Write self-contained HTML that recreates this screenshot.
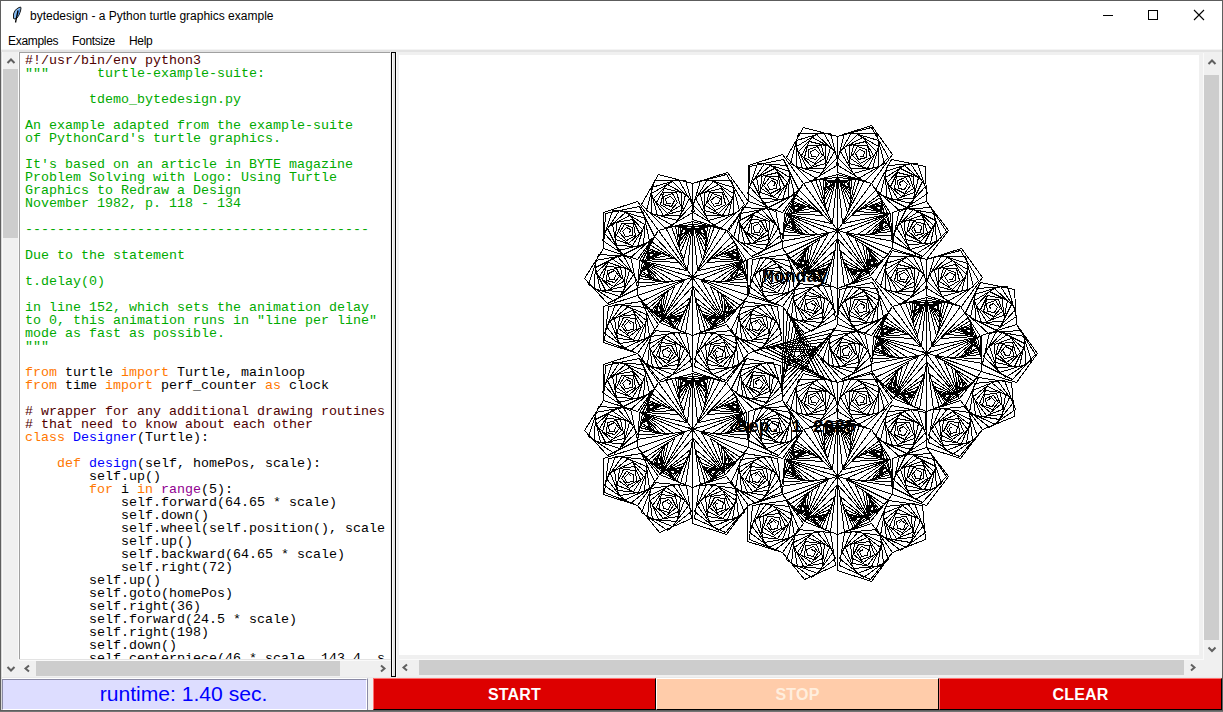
<!DOCTYPE html>
<html><head><meta charset="utf-8">
<style>
*{margin:0;padding:0;box-sizing:border-box}
html,body{width:1223px;height:712px;overflow:hidden;background:#f0f0f0;font-family:"Liberation Sans",sans-serif}
.a{position:absolute}
#title{left:0;top:0;width:1223px;height:49px;background:#fff}
#ttext{left:30px;top:9px;font-size:12px;color:#000;white-space:pre}
.menu{top:34px;font-size:12px;color:#000;letter-spacing:-0.3px}
#code{left:20px;top:53px;width:370px;height:606px;background:#fff;overflow:hidden}
#codepre{position:absolute;left:5px;top:1px;font-family:"Liberation Mono",monospace;font-size:13.33px;line-height:13px;white-space:pre;color:#000}
#canvas{left:399px;top:55px;width:800px;height:600px;background:#fff;overflow:hidden}
.thumb{background:#cdcdcd}
.btn{top:678px;height:32px;font-family:"Liberation Sans",sans-serif;font-weight:bold;font-size:16px;text-align:center;line-height:31px;letter-spacing:0.2px;border-style:solid;border-width:1px}
.arr{fill:none;stroke:#606060;stroke-width:2}
</style></head><body>
<!-- title bar -->
<div id="title" class="a"></div>
<svg class="a" style="left:0;top:0" width="30" height="30">
  <path d="M13.5 18.5 L13.5 14 L15 10.5 L18 8 L20.5 7 L21 8 L20.5 11 L19 15 L17 18 L15 19 Z" fill="#86bbf0" stroke="#1a1a1a" stroke-width="1"/>
  <path d="M20 8.5 L19.5 12 L18 16 L16.5 17.5 L17.5 11.5 Z" fill="#3f86e0"/>
  <path d="M18 10.5 L15.5 22.5" stroke="#000" stroke-width="1.3"/>
</svg>
<div id="ttext" class="a">bytedesign - a Python turtle graphics example</div>
<svg class="a" style="left:1100px;top:8px" width="110" height="16">
  <rect x="3" y="7" width="10" height="1" fill="#000"/>
  <rect x="48.5" y="2.5" width="9" height="9" fill="none" stroke="#000" stroke-width="1"/>
  <path d="M94 2 L104 12 M104 2 L94 12" stroke="#000" stroke-width="1.1"/>
</svg>
<div class="a menu" style="left:8px">Examples</div>
<div class="a menu" style="left:72px">Fontsize</div>
<div class="a menu" style="left:129px">Help</div>
<div class="a" style="left:0;top:49px;width:1223px;height:1px;background:#f4f4f4"></div>
<div class="a" style="left:0;top:50px;width:1223px;height:2px;background:#e3e3e3"></div>

<!-- left pane -->
<div class="a" style="left:2px;top:52px;width:1px;height:626px;background:#fafafa"></div>
<div class="a" style="left:18px;top:52px;width:1px;height:608px;background:#fafafa"></div>
<div class="a thumb" style="left:3px;top:69px;width:15px;height:169px"></div>
<svg class="a" style="left:0;top:0" width="400" height="712">
  <path class="arr" d="M7.5 63 L11 59.5 L14.5 63"/>
  <path class="arr" d="M7.5 667 L11 670.5 L14.5 667"/>
  <path class="arr" d="M29 665.5 L25.5 668.5 L29 671.5"/>
  <path class="arr" d="M381 665.5 L384.5 668.5 L381 671.5"/>
</svg>
<div id="code" class="a"><pre id="codepre"><span style="color:#500000">#!/usr/bin/env python3</span>
<span style="color:#00aa00">&quot;&quot;&quot;      turtle-example-suite:</span>

<span style="color:#00aa00">        tdemo_bytedesign.py</span>

<span style="color:#00aa00">An example adapted from the example-suite</span>
<span style="color:#00aa00">of PythonCard&#x27;s turtle graphics.</span>

<span style="color:#00aa00">It&#x27;s based on an article in BYTE magazine</span>
<span style="color:#00aa00">Problem Solving with Logo: Using Turtle</span>
<span style="color:#00aa00">Graphics to Redraw a Design</span>
<span style="color:#00aa00">November 1982, p. 118 - 134</span>

<span style="color:#00aa00">-------------------------------------------</span>

<span style="color:#00aa00">Due to the statement</span>

<span style="color:#00aa00">t.delay(0)</span>

<span style="color:#00aa00">in line 152, which sets the animation delay</span>
<span style="color:#00aa00">to 0, this animation runs in &quot;line per line&quot;</span>
<span style="color:#00aa00">mode as fast as possible.</span>
<span style="color:#00aa00">&quot;&quot;&quot;</span>

<span style="color:#ff7700">from</span> turtle <span style="color:#ff7700">import</span> Turtle, mainloop
<span style="color:#ff7700">from</span> time <span style="color:#ff7700">import</span> perf_counter <span style="color:#ff7700">as</span> clock

<span style="color:#500000"># wrapper for any additional drawing routines</span>
<span style="color:#500000"># that need to know about each other</span>
<span style="color:#ff7700">class</span> <span style="color:#0000ff">Designer</span>(Turtle):

    <span style="color:#ff7700">def</span> <span style="color:#0000ff">design</span>(self, homePos, scale):
        self.up()
        <span style="color:#ff7700">for</span> i <span style="color:#ff7700">in</span> <span style="color:#900090">range</span>(5):
            self.forward(64.65 * scale)
            self.down()
            self.wheel(self.position(), scale
            self.up()
            self.backward(64.65 * scale)
            self.right(72)
        self.up()
        self.goto(homePos)
        self.right(36)
        self.forward(24.5 * scale)
        self.right(198)
        self.down()
        self.centerpiece(46 * scale, 143.4, s</pre></div>
<div class="a" style="left:19px;top:52px;width:371px;height:1px;background:#a0a0a0"></div>
<div class="a" style="left:19px;top:52px;width:1px;height:607px;background:#a0a0a0"></div>
<div class="a" style="left:19px;top:659px;width:372px;height:1px;background:#e3e3e3"></div>
<div class="a" style="left:19px;top:660px;width:372px;height:1px;background:#fafafa"></div>
<!-- left h-scroll -->
<div class="a thumb" style="left:36px;top:661px;width:304px;height:15px"></div>
<div class="a" style="left:0;top:677px;width:1223px;height:1px;background:#e8e8e8"></div>
<!-- sash -->
<div class="a" style="left:391px;top:52px;width:5px;height:625px;background:#e3e3e3;border:1px solid #000"></div>
<div class="a" style="left:392px;top:53px;width:1px;height:623px;background:#fafafa"></div>

<!-- canvas -->
<div class="a" style="left:396px;top:52px;width:1px;height:626px;background:#fafafa"></div>
<div id="canvas" class="a">
<svg width="800" height="600" style="position:absolute;left:0;top:0">
<g transform="translate(-398.5,-54.5)">
<path d="M960 400L982 429 960 458 926 447 926 411 960 400 982 429 959 456 928 442 933 409 966 406 977 436 952 454 928 435 940 408 969 412 972 440 946 450 931 429 947 408 970 419 966 443 943 445 934 424 952 411 969 424 961 443 941 440 939 421 956 414 967 429 956 442 941 435 943 420 958 418 963 431 952 439 943 431 948 421 958 422 959 433 951 436 946 429 950 423 957 426 956 432 950 433 949 428 952 426M960 400L982 429 960 458 926 447 926 411 960 400 982 429 1014 416 1011 382 978 377 964 407 989 427 1015 409 1004 380 974 383 969 412 995 424 1013 402 997 380 972 390 975 415 999 419 1009 397 991 382 973 396 981 416 1002 414 1005 394 987 386 975 400 986 415 1002 409 1000 392 985 390 979 403 990 412 1000 404 996 393 984 394 982 405 992 409 998 402 993 395 985 398 986 405 992 406 995 401 991 397 987 400M981 335L1016 324 1037 353 1016 382 981 371 981 335 1016 324 1035 354 1012 379 982 364 989 332 1021 330 1031 360 1005 377 983 356 996 331 1024 336 1025 364 999 372 985 350 1002 332 1024 343 1019 366 996 367 989 346 1007 334 1023 348 1014 366 995 362 994 344 1011 338 1020 352 1009 364 995 357 998 343 1012 342 1016 355 1006 362 997 354 1002 344 1012 346 1013 356 1004 358 1000 352 1005 346 1011 349 1009 355 1005 355 1003 351M981 335L1016 324 1037 353 1016 382 981 371 981 335 1016 324 1014 289 980 282 965 312 989 334 1016 316 1007 286 976 288 970 317 996 330 1015 309 1000 286 974 294 975 320 1000 326 1011 304 994 288 974 300 981 322 1003 321 1007 300 989 291 976 305 986 321 1003 315 1002 298 987 295 980 309 990 319 1002 311 998 299 986 299 983 311 993 316 1000 308 995 300 986 303 987 311 994 312 997 307 993 303 989 305 990 309M926 295L926 259 961 248 982 277 961 306 926 295 926 259 960 250 978 280 954 304 925 287 934 256 965 256 973 286 947 301 926 280 941 255 967 263 967 289 942 296 929 274 947 257 967 269 961 291 939 291 934 270 952 260 966 274 956 291 938 286 938 268 955 264 963 278 952 289 939 281 943 268 956 268 959 280 949 286 941 278 946 269 955 272 955 280 948 282 944 276 949 272 954 274 952 279 948 279M926 295L926 259 961 248 982 277 961 306 926 295 926 259 892 250 875 280 899 304 927 287 919 256 888 256 880 286 906 301 926 280 912 255 885 263 885 289 911 296 923 274 906 257 885 269 891 291 913 291 919 270 901 260 887 274 897 291 914 286 914 268 898 264 890 278 901 289 914 281 910 268 897 268 894 280 904 286 911 278 906 269 897 272 897 280 905 282 908 276 904 272 899 274 900 279 904 279M871 335L837 324 837 288 871 277 892 306 871 335 837 324 839 289 872 282 888 312 863 334 836 316 846 286 877 288 883 317 857 330 838 309 853 286 878 294 877 320 852 326 841 304 859 288 878 300 871 322 850 321 845 300 863 291 876 305 866 321 849 315 850 298 866 295 873 309 862 319 850 311 854 299 867 299 869 311 860 316 853 308 858 300 866 303 866 311 859 312 856 307 860 303 864 305 863 309M871 335L837 324 837 288 871 277 892 306 871 335 837 324 818 354 841 379 871 364 864 332 832 330 822 360 848 377 870 356 857 331 829 336 828 364 853 372 867 350 850 332 829 343 833 366 857 367 863 346 845 334 830 348 839 366 858 362 859 344 842 338 833 352 844 364 857 357 854 343 840 342 836 355 847 362 855 354 850 344 840 346 840 356 848 358 852 352 848 346 842 349 843 355 848 355 849 351M926 353L926 348 926 411 893 398 926 362 919 409 896 396 924 373 914 407 898 395 921 380 910 405 900 394 918 386 908 403 901 394 916 390 906 401 902 394 914 392 905 400 903 394 912 394 905 398 904 394 910 395M926 353L926 348 926 411 959 398 927 362 933 409 957 396 929 373 939 407 955 395 931 380 942 405 953 394 934 386 945 403 951 394 937 390 946 401 950 394 939 392 947 400 950 394 941 394 948 398 949 394 943 395M926 353L922 351 981 371 959 398 935 356 977 377 958 395 944 362 974 381 957 393 951 366 971 384 957 391 955 371 968 386 957 390 958 374 966 387 958 388 960 377 964 387 958 388 961 380 963 388 958 387 961 381M926 353L922 351 981 371 980 336 935 355 982 363 977 337 946 357 981 358 975 339 954 357 980 354 974 341 960 356 979 351 973 342 964 354 978 349 972 343 967 353 977 347 972 343 970 352 976 347 972 344 971 350M926 353L923 357 960 306 980 336 932 346 965 312 976 336 940 338 968 317 974 336 947 334 970 320 972 335 952 331 970 324 971 335 956 329 971 326 970 334 960 329 971 328 969 334 962 329 971 329 969 333 964 329M926 353L923 357 960 306 926 297 931 345 953 303 927 300 936 335 948 302 928 302 938 328 944 302 929 304 939 322 941 302 930 305 939 317 938 302 931 306 939 314 937 303 931 306 938 311 936 304 932 307 938 310M926 353L929 357 892 306 926 297 921 345 899 303 925 300 917 335 905 302 924 302 914 328 909 302 923 304 913 322 912 302 923 305 913 317 914 302 922 306 914 314 916 303 921 306 914 311 917 304 921 307 915 310M926 353L929 357 892 306 873 336 920 346 888 312 876 336 913 338 885 317 879 336 906 334 883 320 881 335 901 331 882 324 882 335 896 329 882 326 883 334 893 329 882 328 884 334 891 329 882 329 884 333 889 329M926 353L931 351 871 371 873 336 917 355 871 363 876 337 907 357 871 358 878 339 899 357 872 354 879 341 893 356 873 351 880 342 888 354 874 349 880 343 885 353 875 347 880 343 883 352 876 347 880 344 882 350M926 353L931 351 871 371 893 398 918 356 875 377 895 395 908 362 879 381 895 393 902 366 882 384 895 391 897 371 885 386 895 390 895 374 887 387 895 388 893 377 888 387 895 388 892 380 890 388 894 387 892 381M926 353L893 398M926 353L873 336M926 353L926 297M926 353L980 336M926 353L959 398M803 523L782 552 747 541 747 505 782 494 803 523 782 552 749 539 752 505 786 500 799 530 774 550 749 532 760 503 789 506 794 535 768 547 751 525 766 503 791 513 788 538 764 542 754 520 772 505 790 519 782 539 762 537 759 517 776 509 788 523 777 538 762 532 763 515 779 513 785 526 774 535 763 527 767 516 779 517 781 528 772 532 766 525 771 518 778 521 777 528 771 529 769 523 773 520 776 523M803 523L782 552 747 541 747 505 782 494 803 523 782 552 804 579 835 565 830 532 797 529 786 559 811 577 835 558 823 531 794 535 791 563 817 573 833 551 816 531 793 542 797 566 821 568 829 547 811 534 794 547 803 566 822 563 824 544 807 537 797 552 807 565 822 558 820 543 805 541 800 554 811 562 820 554 816 544 805 545 804 556 813 559 818 552 813 546 806 549 807 555 813 556 815 551 811 549M871 523L892 552 871 581 837 570 837 534 871 523 892 552 870 579 839 565 844 532 877 529 888 559 863 577 839 558 851 531 880 535 883 563 857 573 841 551 858 531 881 542 877 566 853 568 845 547 863 534 880 547 871 566 852 563 850 544 867 537 877 552 867 565 852 558 854 543 869 541 874 554 863 562 853 554 858 544 869 545 870 556 861 559 856 552 861 546 868 549 867 555 861 556 859 551 863 549M871 523L892 552 871 581 837 570 837 534 871 523 892 552 925 539 922 505 888 500 875 530 900 550 925 532 914 503 885 506 880 535 906 547 923 525 907 503 883 513 886 538 910 542 920 520 902 505 884 519 891 539 912 537 915 517 898 509 886 523 896 538 912 532 911 515 895 513 889 526 900 535 911 527 906 516 895 517 893 528 902 532 908 525 903 518 896 521 897 528 903 529 905 523 901 520 898 523M892 458L926 447 948 476 926 505 892 494 892 458 926 447 946 476 922 502 892 487 899 455 931 453 941 483 915 499 893 479 906 453 934 459 936 487 910 495 896 473 913 455 935 466 930 489 907 490 900 469 918 457 933 471 924 489 905 485 904 467 921 461 931 475 920 487 906 480 909 466 923 465 927 478 917 485 908 477 913 467 923 469 923 478 915 481 911 475 916 469 921 472 920 478 915 478 914 474M892 458L926 447 948 476 926 505 892 494 892 458 926 447 925 412 891 405 875 435 900 457 927 439 917 409 887 411 880 440 906 453 925 432 910 409 885 417 886 443 911 449 922 427 904 411 885 423 892 445 913 444 918 423 900 414 887 428 897 444 914 438 913 421 897 418 890 432 901 442 913 434 909 422 896 422 894 434 904 439 910 431 905 423 897 426 898 434 904 435 907 430 903 426 899 428 900 432M837 418L837 382 871 371 892 400 871 429 837 418 837 382 871 373 888 403 864 427 836 410 844 379 876 379 884 409 858 424 837 403 851 378 878 386 878 412 853 419 840 397 857 380 878 392 872 414 850 414 844 393 862 383 876 397 867 414 849 409 849 391 865 387 873 401 862 412 850 404 853 391 867 391 870 403 860 409 852 401 857 392 866 395 866 403 858 405 855 399 859 395 864 397 863 402 859 402M837 418L837 382 871 371 892 400 871 429 837 418 837 382 803 373 786 403 810 427 838 410 830 379 798 379 790 409 816 424 837 403 823 378 796 386 796 412 821 419 834 397 816 380 796 392 802 414 824 414 830 393 812 383 798 397 807 414 825 409 825 391 809 387 801 401 811 412 824 404 821 391 807 391 804 403 814 409 822 401 817 392 808 395 808 403 815 405 819 399 815 395 810 397 811 402 815 402M837 476L842 474 782 494 784 459 828 478 781 486 786 460 817 480 782 481 788 462 809 480 783 477 790 464 803 479 784 474 790 465 799 477 785 472 791 466 796 476 786 470 791 466 794 475 787 469 791 467 792 473M837 476L842 474 782 494 804 521 828 479 786 500 805 518 819 485 789 504 806 516 812 489 793 507 806 514 808 494 795 509 806 512 805 497 797 510 806 511 804 500 799 510 805 511 803 502 800 511 805 510 802 504M837 476L837 471 837 534 804 521 836 485 830 532 807 519 834 496 825 530 809 518 832 503 821 528 810 517 829 509 819 526 812 517 827 513 817 524 813 517 824 515 816 523 814 517 822 517 815 521 814 517 821 518M837 476L837 471 837 534 870 521 838 485 844 532 867 519 840 496 849 530 865 518 842 503 853 528 863 517 845 509 855 526 862 517 847 513 857 524 861 517 850 515 858 523 860 517 852 517 859 521 860 517 853 518M837 476L832 474 892 494 870 521 846 479 888 500 869 518 855 485 884 504 868 516 862 489 881 507 868 514 866 494 879 509 868 512 869 497 877 510 868 511 870 500 875 510 869 511 871 502 874 511 869 510 872 504M837 476L832 474 892 494 890 459 846 478 893 486 887 460 857 480 892 481 886 462 865 480 891 477 884 464 871 479 890 474 884 465 875 477 889 472 883 466 878 476 888 470 883 466 880 475 887 469 883 467 882 473M837 476L834 480 871 429 890 459 843 469 876 435 887 459 851 461 879 440 884 459 857 457 880 443 883 458 863 454 881 446 881 458 867 452 881 449 880 457 870 452 881 451 880 457 873 452 881 452 879 456 875 452M837 476L834 480 871 429 837 420 842 468 864 426 838 423 847 458 859 425 839 425 849 451 855 425 840 427 850 445 851 425 841 428 850 440 849 425 841 429 850 437 847 426 842 429 849 434 846 426 843 430 848 433M837 476L840 480 803 429 837 420 832 468 810 426 836 423 827 458 815 425 835 425 825 451 819 425 834 427 824 445 823 425 833 428 824 440 825 425 832 429 824 437 827 426 832 429 825 434 828 426 831 430 826 433M837 476L840 480 803 429 784 459 831 469 798 435 787 459 823 461 795 440 789 459 817 457 794 443 791 458 811 454 793 446 793 458 807 452 793 449 794 457 804 452 793 451 794 457 801 452 793 452 795 456 799 452M837 476L784 459M837 476L837 420M837 476L890 459M837 476L870 521M837 476L804 521M637 411L603 400 603 364 637 353 658 382 637 411 603 400 605 365 639 358 654 388 629 410 602 392 612 362 643 364 649 393 623 406 604 385 619 362 645 370 643 396 618 402 607 380 625 364 644 376 637 398 616 397 612 376 629 367 642 381 632 397 615 391 616 374 632 371 639 385 628 395 616 387 621 375 633 375 635 387 626 392 619 384 624 376 632 379 632 387 625 388 622 383 626 379 630 381 629 385M637 411L603 400 603 364 637 353 658 382 637 411 603 400 584 430 607 455 637 440 630 408 598 406 588 436 614 453 636 432 623 407 595 412 594 440 619 448 633 426 617 408 595 419 600 442 623 443 629 422 611 410 596 424 605 442 624 438 625 420 608 414 599 428 610 440 623 433 620 419 606 418 602 431 613 438 621 430 616 420 607 422 606 432 614 434 619 428 614 422 608 425 609 431 614 431 615 427M658 476L637 505 603 494 603 458 637 447 658 476 637 505 604 492 608 458 641 453 655 483 630 503 604 485 615 456 645 459 649 488 623 500 606 478 622 456 646 466 644 491 619 495 610 473 628 458 646 472 638 492 617 490 614 470 632 462 643 476 633 491 617 485 619 468 634 466 640 479 629 488 618 480 623 469 635 470 636 481 627 485 621 478 626 471 633 474 633 481 626 482 624 477 628 473 631 476M658 476L637 505 603 494 603 458 637 447 658 476 637 505 659 532 691 518 686 485 653 482 641 512 667 530 691 511 678 484 650 488 647 516 672 526 688 505 672 484 649 495 652 519 676 521 684 500 666 487 650 500 658 519 678 516 680 497 663 490 652 505 663 518 678 511 675 496 661 494 656 507 666 515 676 507 671 497 660 498 659 509 668 512 673 505 668 499 662 502 663 508 668 509 670 504 667 502M726 476L748 505 726 534 692 523 692 487 726 476 748 505 725 532 694 518 699 485 732 482 744 512 718 530 694 511 706 484 735 488 738 516 712 526 697 505 713 484 736 495 732 519 709 521 700 500 718 487 735 500 727 519 707 516 705 497 722 490 733 505 722 518 707 511 710 496 724 494 729 507 719 515 709 507 714 497 724 498 725 509 717 512 712 505 717 499 723 502 722 508 716 509 715 504 718 502M726 476L748 505 726 534 692 523 692 487 726 476 748 505 781 492 777 458 744 453 730 483 755 503 781 485 770 456 740 459 735 488 761 500 779 478 763 456 739 466 741 491 765 495 775 473 757 458 739 472 747 492 768 490 771 470 753 462 741 476 752 491 768 485 766 468 751 466 745 479 756 488 766 480 762 469 750 470 749 481 758 485 764 478 759 471 751 474 752 481 758 482 761 477 757 473 754 476M748 411L782 400 803 429 782 458 748 447 748 411 782 400 801 430 778 455 748 440 755 408 787 406 797 436 771 453 749 432 762 407 790 412 791 440 766 448 751 426 768 408 790 419 785 442 762 443 755 422 773 410 789 424 780 442 761 438 760 420 777 414 786 428 775 440 761 433 764 419 778 418 782 431 772 438 763 430 768 420 778 422 779 432 771 434 766 428 771 422 777 425 776 431 771 431 769 427M748 411L782 400 803 429 782 458 748 447 748 411 782 400 780 365 746 358 731 388 755 410 782 392 773 362 742 364 736 393 762 406 781 385 766 362 740 370 742 396 766 402 778 380 760 364 740 376 747 398 769 397 773 376 755 367 742 381 753 397 769 391 769 374 753 371 746 385 757 395 768 387 764 375 752 375 749 387 759 392 766 384 761 376 753 379 753 387 760 388 763 383 759 379 755 381 756 385M692 429L695 433 658 382 692 373 687 421 665 379 692 376 683 411 671 378 691 378 680 404 675 378 690 380 679 398 678 378 689 381 679 393 680 378 688 382 680 390 682 379 687 382 680 387 683 380 687 383 681 386M692 429L695 433 658 382 639 412 686 422 654 388 642 412 679 414 651 393 645 412 672 410 649 396 647 411 667 407 648 400 648 411 662 405 648 402 649 410 659 405 648 404 650 410 657 405 648 405 650 409 655 405M692 429L697 427 637 447 639 412 683 431 637 439 642 413 673 433 637 434 644 415 665 433 638 430 645 417 659 432 639 427 646 418 654 430 640 425 646 419 651 429 642 423 646 419 649 428 642 423 647 420 648 426M692 429L697 427 637 447 660 474 684 432 641 453 661 471 674 438 645 457 661 469 668 442 648 460 661 467 664 447 651 462 661 466 661 450 653 463 661 464 659 453 655 463 661 464 658 456 656 464 661 463 658 457M692 429L692 424 692 487 659 474 692 438 685 485 662 472 690 449 680 483 664 471 687 456 676 481 666 470 685 462 674 479 667 470 682 466 672 477 668 470 680 468 671 476 669 470 678 470 671 474 670 470 676 471M692 429L692 424 692 487 725 474 693 438 700 485 723 472 695 449 705 483 721 471 698 456 708 481 719 470 700 462 711 479 718 470 703 466 712 477 716 470 705 468 713 476 716 470 707 470 714 474 715 470 709 471M692 429L688 427 748 447 725 474 701 432 744 453 724 471 710 438 740 457 724 469 717 442 737 460 723 467 721 447 734 462 724 466 724 450 732 463 724 464 726 453 730 463 724 464 727 456 729 464 724 463 727 457M692 429L688 427 748 447 746 412 701 431 748 439 743 413 712 433 747 434 741 415 720 433 747 430 740 417 726 432 745 427 739 418 730 430 744 425 739 419 734 429 743 423 738 419 736 428 742 423 738 420 737 426M692 429L689 433 726 382 746 412 698 422 731 388 742 412 706 414 734 393 740 412 713 410 736 396 738 411 718 407 737 400 737 411 722 405 737 402 736 410 726 405 737 404 735 410 728 405 737 405 735 409 730 405M692 429L689 433 726 382 692 373 697 421 720 379 693 376 702 411 714 378 694 378 704 404 710 378 695 380 705 398 707 378 696 381 706 393 704 378 697 382 705 390 703 379 698 382 705 387 702 380 698 383 704 386M692 429L692 373M692 429L746 412M692 429L725 474M692 429L659 474M692 429L639 412M692 219L692 183 727 172 748 201 727 230 692 219 692 183 726 174 744 204 720 228 691 211 700 180 731 180 739 210 713 225 692 204 707 179 733 187 733 213 708 220 695 198 713 181 733 193 728 215 705 215 700 194 718 184 732 198 722 215 704 210 704 192 721 188 729 202 718 213 705 205 709 192 722 192 725 204 715 210 707 202 712 193 721 196 721 204 714 206 710 200 715 196 720 198 718 203 714 203M692 219L692 183 727 172 748 201 727 230 692 219 692 183 658 174 641 204 665 228 694 211 685 180 654 180 646 210 672 225 692 204 678 179 651 187 651 213 677 220 689 198 672 181 651 193 657 215 680 215 685 194 667 184 653 198 663 215 681 210 681 192 664 188 656 202 667 213 680 205 676 192 663 192 660 204 670 210 677 202 672 193 663 196 663 204 671 206 674 200 670 196 665 198 666 203 670 203M637 259L603 248 603 212 637 201 658 230 637 259 603 248 605 213 639 206 654 236 629 258 602 240 612 210 643 212 649 241 623 254 604 233 619 210 645 218 643 244 618 250 607 228 625 212 644 224 637 246 616 245 612 224 629 215 642 229 632 245 615 239 616 222 632 219 639 233 628 243 616 235 621 223 633 223 635 235 626 240 619 232 624 224 632 227 632 235 625 236 622 231 626 227 630 229 629 233M637 259L603 248 603 212 637 201 658 230 637 259 603 248 584 278 607 303 637 288 630 256 598 254 588 284 614 301 636 280 623 255 595 260 594 288 619 296 633 274 617 256 595 267 600 290 623 291 629 270 611 258 596 272 605 290 624 286 625 268 608 262 599 276 610 288 623 281 620 267 606 266 602 279 613 286 621 278 616 268 607 270 606 280 614 282 619 276 614 270 608 273 609 279 614 279 615 275M658 324L637 353 603 342 603 306 637 295 658 324 637 353 604 340 608 306 641 301 655 331 630 351 604 333 615 304 645 307 649 336 623 348 606 326 622 304 646 314 644 339 619 343 610 321 628 306 646 320 638 340 617 338 614 318 632 310 643 324 633 339 617 333 619 316 634 314 640 327 629 336 618 328 623 317 635 318 636 329 627 333 621 326 626 319 633 322 633 329 626 330 624 325 628 321 631 324M658 324L637 353 603 342 603 306 637 295 658 324 637 353 659 380 691 366 686 333 653 330 641 360 667 378 691 359 678 332 650 336 647 364 672 374 688 353 672 332 649 343 652 367 676 369 684 348 666 335 650 348 658 367 678 364 680 345 663 338 652 353 663 366 678 359 675 344 661 342 656 355 666 363 676 355 671 345 660 346 659 357 668 360 673 353 668 347 662 350 663 356 668 357 670 352 667 350M726 324L748 353 726 382 692 371 692 335 726 324 748 353 725 380 694 366 699 333 732 330 744 360 718 378 694 359 706 332 735 336 738 364 712 374 697 353 713 332 736 343 732 367 709 369 700 348 718 335 735 348 727 367 707 364 705 345 722 338 733 353 722 366 707 359 710 344 724 342 729 355 719 363 709 355 714 345 724 346 725 357 717 360 712 353 717 347 723 350 722 356 716 357 715 352 718 350M726 324L748 353 726 382 692 371 692 335 726 324 748 353 781 340 777 306 744 301 730 331 755 351 781 333 770 304 740 307 735 336 761 348 779 326 763 304 739 314 741 339 765 343 775 321 757 306 739 320 747 340 768 338 771 318 753 310 741 324 752 339 768 333 766 316 751 314 745 327 756 336 766 328 762 317 750 318 749 329 758 333 764 326 759 319 751 322 752 329 758 330 761 325 757 321 754 324M692 277L689 281 726 230 746 260 698 270 731 236 742 260 706 262 734 241 740 260 713 258 736 244 738 259 718 255 737 248 737 259 722 253 737 250 736 258 726 253 737 252 735 258 728 253 737 253 735 257 730 253M692 277L689 281 726 230 692 221 697 269 720 227 693 224 702 259 714 226 694 226 704 252 710 226 695 228 705 246 707 226 696 229 706 241 704 226 697 230 705 238 703 227 698 230 705 235 702 228 698 231 704 234M692 277L695 281 658 230 692 221 687 269 665 227 692 224 683 259 671 226 691 226 680 252 675 226 690 228 679 246 678 226 689 229 679 241 680 226 688 230 680 238 682 227 687 230 680 235 683 228 687 231 681 234M692 277L695 281 658 230 639 260 686 270 654 236 642 260 679 262 651 241 645 260 672 258 649 244 647 259 667 255 648 248 648 259 662 253 648 250 649 258 659 253 648 252 650 258 657 253 648 253 650 257 655 253M692 277L697 275 637 295 639 260 683 279 637 287 642 261 673 281 637 282 644 263 665 281 638 278 645 265 659 280 639 275 646 266 654 278 640 273 646 267 651 277 642 271 646 267 649 276 642 271 647 268 648 274M692 277L697 275 637 295 660 322 684 280 641 301 661 319 674 286 645 305 661 317 668 290 648 308 661 315 664 295 651 310 661 314 661 298 653 311 661 312 659 301 655 311 661 312 658 304 656 312 661 311 658 305M692 277L692 272 692 335 659 322 692 286 685 333 662 320 690 297 680 331 664 319 687 304 676 329 666 318 685 310 674 327 667 318 682 314 672 325 668 318 680 316 671 324 669 318 678 318 671 322 670 318 676 319M692 277L692 272 692 335 725 322 693 286 700 333 723 320 695 297 705 331 721 319 698 304 708 329 719 318 700 310 711 327 718 318 703 314 712 325 716 318 705 316 713 324 716 318 707 318 714 322 715 318 709 319M692 277L688 275 748 295 725 322 701 280 744 301 724 319 710 286 740 305 724 317 717 290 737 308 723 315 721 295 734 310 724 314 724 298 732 311 724 312 726 301 730 311 724 312 727 304 729 312 724 311 727 305M692 277L688 275 748 295 746 260 701 279 748 287 743 261 712 281 747 282 741 263 720 281 747 278 740 265 726 280 745 275 739 266 730 278 744 273 739 267 734 277 743 271 738 267 736 276 742 271 738 268 737 274M692 277L746 260M692 277L725 322M692 277L659 322M692 277L639 260M692 277L692 221M892 212L926 201 948 230 926 259 892 248 892 212 926 201 946 231 922 256 892 241 899 209 931 207 941 237 915 254 893 234 906 208 934 213 936 241 910 249 896 227 913 209 935 220 930 243 907 244 900 223 918 211 933 225 924 243 905 239 904 221 921 215 931 229 920 241 906 234 909 220 923 219 927 232 917 239 908 231 913 221 923 223 923 233 915 235 911 229 916 223 921 226 920 232 915 232 914 228M892 212L926 201 948 230 926 259 892 248 892 212 926 201 925 166 891 159 875 189 900 211 927 193 917 163 887 165 880 194 906 207 925 186 910 163 885 171 886 197 911 203 922 181 904 165 885 177 892 199 913 198 918 177 900 168 887 182 897 198 914 192 913 176 897 172 890 186 901 196 913 188 909 176 896 176 894 188 904 193 910 185 905 177 897 180 898 188 904 189 907 184 903 180 899 182 900 186M837 172L837 136 871 125 892 154 871 183 837 172 837 136 871 127 888 157 864 181 836 164 844 133 876 133 884 163 858 178 837 157 851 132 878 140 878 166 853 173 840 151 857 134 878 146 872 168 850 168 844 147 862 137 876 151 867 168 849 163 849 145 865 141 873 155 862 166 850 158 853 145 867 145 870 157 860 163 852 155 857 146 866 149 866 157 858 159 855 153 859 149 864 151 863 156 859 156M837 172L837 136 871 125 892 154 871 183 837 172 837 136 803 127 786 157 810 181 838 164 830 133 798 133 790 163 816 178 837 157 823 132 796 140 796 166 821 173 834 151 816 134 796 146 802 168 824 168 830 147 812 137 798 151 807 168 825 163 825 145 809 141 801 155 811 166 824 158 821 145 807 145 804 157 814 163 822 155 817 146 808 149 808 157 815 159 819 153 815 149 810 151 811 156 815 156M782 212L748 201 748 165 782 154 803 183 782 212 748 201 749 166 783 159 798 189 774 211 747 193 757 163 787 165 794 194 768 207 749 186 764 163 789 171 788 197 763 203 752 181 770 165 789 177 782 199 760 198 756 177 774 168 787 182 777 198 760 192 761 176 777 172 784 186 773 196 761 188 765 176 778 176 780 188 770 193 763 185 769 177 777 180 776 188 769 189 767 184 771 180 775 182 773 186M782 212L748 201 748 165 782 154 803 183 782 212 748 201 728 231 751 256 781 241 775 209 742 207 733 237 758 254 781 234 767 208 740 213 738 241 764 249 778 227 761 209 739 220 744 243 767 244 774 223 756 211 741 225 750 243 768 239 769 221 753 215 743 229 754 241 768 234 765 220 751 219 747 232 757 239 766 231 761 221 751 223 751 233 759 235 763 229 758 223 753 226 754 232 759 232 760 228M803 277L782 306 747 295 747 259 782 248 803 277 782 306 749 293 752 259 786 254 799 284 774 304 749 286 760 257 789 260 794 289 768 301 751 279 766 257 791 267 788 292 764 296 754 274 772 260 790 273 782 293 762 291 759 271 776 263 788 277 777 292 762 286 763 269 779 267 785 280 774 289 763 282 767 270 779 271 781 282 772 286 766 279 771 272 778 275 777 282 771 283 769 278 773 274 776 277M803 277L782 306 747 295 747 259 782 248 803 277 782 306 804 333 835 319 830 286 797 283 786 313 811 331 835 312 823 285 794 289 791 317 817 327 833 306 816 285 793 296 797 320 821 322 829 301 811 288 794 301 803 320 822 317 824 298 807 291 797 306 807 319 822 312 820 297 805 295 800 308 811 316 820 308 816 298 805 299 804 310 813 313 818 306 813 300 806 303 807 309 813 310 815 305 811 303M837 230L832 228 892 248 870 275 846 233 888 254 869 272 855 239 884 258 868 270 862 243 881 261 868 268 866 248 879 263 868 267 869 251 877 264 868 265 870 254 875 264 869 265 871 257 874 265 869 264 872 258M837 230L832 228 892 248 890 213 846 232 893 241 887 214 857 234 892 235 886 216 865 234 891 231 884 218 871 233 890 228 884 219 875 231 889 226 883 220 878 230 888 224 883 221 880 229 887 224 883 221 882 227M837 230L834 234 871 183 890 213 843 223 876 189 887 213 851 215 879 194 884 213 857 211 880 197 883 212 863 208 881 201 881 212 867 206 881 203 880 211 870 206 881 205 880 211 873 206 881 206 879 210 875 206M837 230L834 234 871 183 837 174 842 222 864 180 838 177 847 212 859 179 839 180 849 205 855 179 840 181 850 199 851 179 841 182 850 194 849 179 841 183 850 191 847 180 842 183 849 188 846 181 843 184 848 187M837 230L840 234 803 183 837 174 832 222 810 180 836 177 827 212 815 179 835 180 825 205 819 179 834 181 824 199 823 179 833 182 824 194 825 179 832 183 824 191 827 180 832 183 825 188 828 181 831 184 826 187M837 230L840 234 803 183 784 213 831 223 798 189 787 213 823 215 795 194 789 213 817 211 794 197 791 212 811 208 793 201 793 212 807 206 793 203 794 211 804 206 793 205 794 211 801 206 793 206 795 210 799 206M837 230L842 228 782 248 784 213 828 232 781 241 786 214 817 234 782 235 788 216 809 234 783 231 790 218 803 233 784 228 790 219 799 231 785 226 791 220 796 230 786 224 791 221 794 229 787 224 791 221 792 227M837 230L842 228 782 248 804 275 828 233 786 254 805 272 819 239 789 258 806 270 812 243 793 261 806 268 808 248 795 263 806 267 805 251 797 264 806 265 804 254 799 264 805 265 803 257 800 265 805 264 802 258M837 230L837 225 837 288 804 275 836 239 830 286 807 273 834 250 825 284 809 272 832 258 821 282 810 271 829 263 819 280 812 271 827 267 817 278 813 271 824 269 816 277 814 271 822 271 815 275 814 271 821 272M837 230L837 225 837 288 870 275 838 239 844 286 867 273 840 250 849 284 865 272 842 258 853 282 863 271 845 263 855 280 862 271 847 267 857 278 861 271 850 269 858 277 860 271 852 271 859 275 860 271 853 272M837 230L870 275M837 230L804 275M837 230L784 213M837 230L837 174M837 230L890 213M837 382L783 307 782 397 834 328 753 351 830 380 787 313 782 390 830 333 759 349 824 377 790 318 782 384 826 338 766 348 818 374 793 324 784 377 821 342 772 348 813 371 795 331 786 371 815 346 779 348 808 367 796 337 788 365 810 349 785 349 803 362 797 343 792 360 804 351 791 351" fill="none" stroke="#000" stroke-width="1" shape-rendering="crispEdges"/>
<text x="795" y="281" text-anchor="middle" font-family="Liberation Mono" font-weight="bold" font-size="18" fill="#000">Monday</text>
<text x="796" y="431" text-anchor="middle" font-family="Liberation Mono" font-weight="bold" font-size="18" fill="#000">Sep. 1 2025</text>
</g>
</svg>
</div>
<div class="a" style="left:1203px;top:53px;width:1px;height:607px;background:#fafafa"></div>
<div class="a" style="left:399px;top:659px;width:805px;height:1px;background:#fafafa"></div>
<div class="a thumb" style="left:1204px;top:75px;width:15px;height:565px"></div>
<div class="a thumb" style="left:419px;top:660px;width:765px;height:15px"></div>
<svg class="a" style="left:390px;top:40px" width="833" height="640">
  <path class="arr" d="M818.5 24 L822 20.5 L825.5 24"/>
  <path class="arr" d="M818.5 607.5 L822 611 L825.5 607.5"/>
  <path class="arr" d="M17 624.5 L13.5 627.5 L17 630.5"/>
  <path class="arr" d="M801 624.5 L804.5 627.5 L801 630.5"/>
</svg>

<!-- bottom -->
<div class="a" style="left:1px;top:678px;width:367px;height:33px;background:#ddf;border-style:solid;border-width:1px;border-color:#fff #8a8aa6 #8a8aa6 #fff"></div>
<div class="a" style="left:2px;top:679px;width:365px;height:31px;border-style:solid;border-width:1px;border-color:#8a8aa6 #fff #fff #8a8aa6"></div>
<div class="a" style="left:0px;top:678px;width:367px;height:32px;font-size:21.1px;color:#0000ff;text-align:center;line-height:32px">runtime: 1.40 sec.</div>
<div class="a btn" style="left:373px;width:283px;background:#dd0000;color:#fff;border-color:#ff7070 #000 #000 #ff7070">START</div>
<div class="a btn" style="left:656px;width:283px;background:#ffccaa;color:#ffeedd;border-color:#fff #000 #000 #fff">STOP</div>
<div class="a btn" style="left:939px;width:283px;background:#dd0000;color:#fff;border-color:#ff7070 #000 #000 #ff7070">CLEAR</div>

<!-- window border -->
<div class="a" style="left:0;top:0;width:1px;height:712px;background:#5f5f5f"></div>
<div class="a" style="left:1px;top:52px;width:1px;height:658px;background:#d8d8d8"></div>
<div class="a" style="left:0;top:0;width:1223px;height:1px;background:#5c5c5c"></div>
<div class="a" style="left:1222px;top:0;width:1px;height:712px;background:#5f5f5f"></div>
<div class="a" style="left:0;top:710px;width:1223px;height:1px;background:#5e5e5e"></div>
<div class="a" style="left:0;top:711px;width:1223px;height:1px;background:#747474"></div>
</body></html>
